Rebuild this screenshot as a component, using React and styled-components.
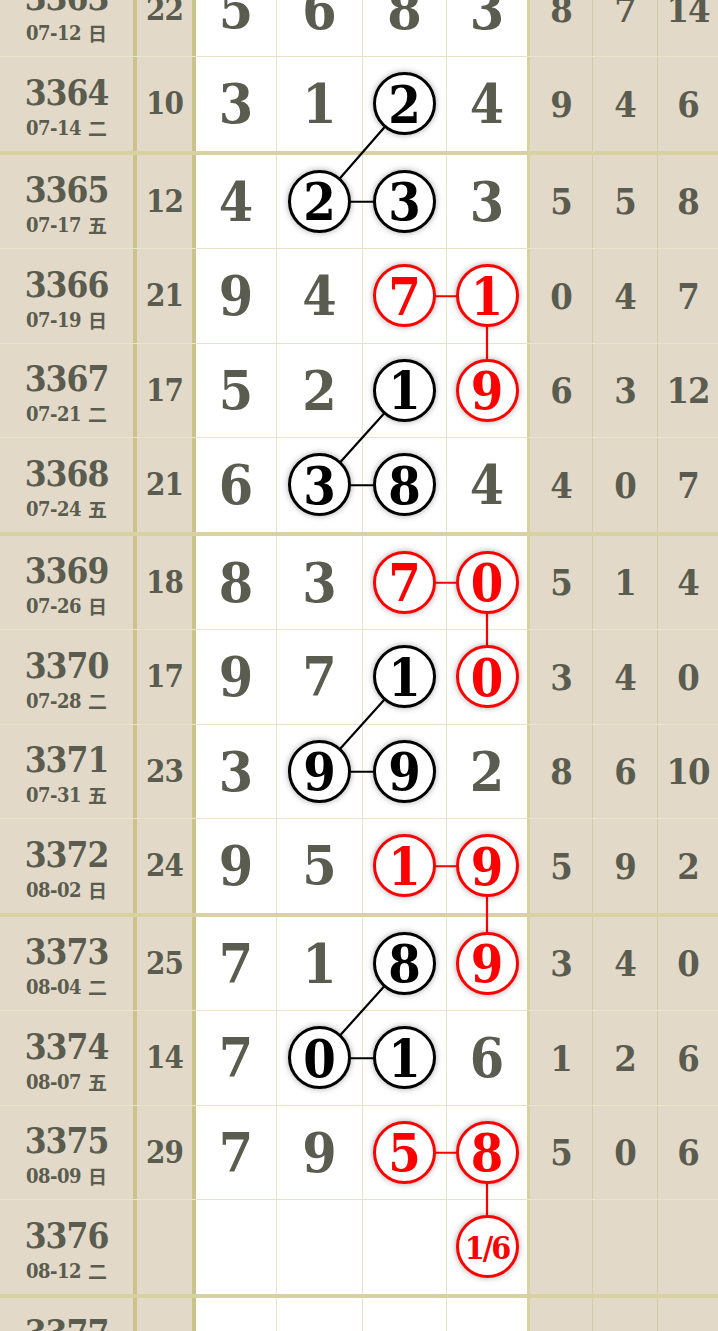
import React from 'react';
import styled, { createGlobalStyle, css } from 'styled-components';

const GlobalStyle = createGlobalStyle`
  html, body { margin: 0; padding: 0; background: #ffffff; overflow: hidden; }
  body { font-family: "DejaVu Serif", "Liberation Serif", "Noto Sans CJK SC", serif; }
`;

const ROW_H = 93.5;
const THIN = 1;
const THICK = 4;
const COL_W = [137, 59, 81, 86, 84, 83, 63, 65, 60];
const DIGIT_CX = [236, 319.5, 404.5, 487];

const INK = '#5a5c4f';
const BEIGE = '#e2d9c8';
const LINE_THIN = 'rgba(190, 178, 100, 0.35)';
const LINE_THICK = 'rgba(190, 178, 100, 0.6)';

const b = (v) => ({ v, c: 'b' });
const r = (v) => ({ v, c: 'r' });

const ROWS = [
  { no: '3363', date: '07-12', wd: '日', sum: '22', d: [5, 6, 8, 3], m: [8, 7, 14] },
  { no: '3364', date: '07-14', wd: '二', sum: '10', d: [3, 1, b(2), 4], m: [9, 4, 6] },
  { no: '3365', date: '07-17', wd: '五', sum: '12', d: [4, b(2), b(3), 3], m: [5, 5, 8] },
  { no: '3366', date: '07-19', wd: '日', sum: '21', d: [9, 4, r(7), r(1)], m: [0, 4, 7] },
  { no: '3367', date: '07-21', wd: '二', sum: '17', d: [5, 2, b(1), r(9)], m: [6, 3, 12] },
  { no: '3368', date: '07-24', wd: '五', sum: '21', d: [6, b(3), b(8), 4], m: [4, 0, 7] },
  { no: '3369', date: '07-26', wd: '日', sum: '18', d: [8, 3, r(7), r(0)], m: [5, 1, 4] },
  { no: '3370', date: '07-28', wd: '二', sum: '17', d: [9, 7, b(1), r(0)], m: [3, 4, 0] },
  { no: '3371', date: '07-31', wd: '五', sum: '23', d: [3, b(9), b(9), 2], m: [8, 6, 10] },
  { no: '3372', date: '08-02', wd: '日', sum: '24', d: [9, 5, r(1), r(9)], m: [5, 9, 2] },
  { no: '3373', date: '08-04', wd: '二', sum: '25', d: [7, 1, b(8), r(9)], m: [3, 4, 0] },
  { no: '3374', date: '08-07', wd: '五', sum: '14', d: [7, b(0), b(1), 6], m: [1, 2, 6] },
  { no: '3375', date: '08-09', wd: '日', sum: '29', d: [7, 9, r(5), r(8)], m: [5, 0, 6] },
  { no: '3376', date: '08-12', wd: '二', sum: '', d: ['', '', '', r('1/6')], m: ['', '', ''] },
  { no: '3377', date: '08-14', wd: '四', sum: '', d: ['', '', '', ''], m: ['', '', ''] },
];

const isGroupEnd = (no) => (Number(no) - 3364) % 4 === 0;

// [fromRow, fromCol, toRow, toCol, colour]
const LINKS = [
  [1, 2, 2, 1, 'b'], [2, 1, 2, 2, 'b'],
  [3, 2, 3, 3, 'r'], [3, 3, 4, 3, 'r'],
  [4, 2, 5, 1, 'b'], [5, 1, 5, 2, 'b'],
  [6, 2, 6, 3, 'r'], [6, 3, 7, 3, 'r'],
  [7, 2, 8, 1, 'b'], [8, 1, 8, 2, 'b'],
  [9, 2, 9, 3, 'r'], [9, 3, 10, 3, 'r'],
  [10, 2, 11, 1, 'b'], [11, 1, 11, 2, 'b'],
  [12, 2, 12, 3, 'r'], [12, 3, 13, 3, 'r'],
];

const rowCenters = (() => {
  const out = [];
  let y = 0;
  ROWS.forEach((row) => {
    out.push(y + ROW_H / 2);
    y += ROW_H + (isGroupEnd(row.no) ? THICK : THIN);
  });
  return out;
})();

const Board = styled.div`
  position: relative;
  width: 718px;
  margin-top: -37.5px;
`;

const Row = styled.div`
  display: grid;
  grid-template-columns: ${COL_W.map((w) => `${w}px`).join(' ')};
  height: ${ROW_H}px;
  box-sizing: content-box;
  border-bottom: ${(p) => (p.$thick ? `${THICK}px solid ${LINE_THICK}` : `${THIN}px solid ${LINE_THIN}`)};
`;

const Cell = styled.div`
  box-sizing: border-box;
  display: flex;
  align-items: center;
  justify-content: center;
  color: ${INK};
  font-weight: bold;
  ${(p) => p.$tone === 'beige' && css`background: ${BEIGE};`}
  ${(p) => p.$tone === 'white' && css`background: #ffffff;`}
  border-right: ${(p) => (p.$edge ? `${p.$edge}px solid ${p.$edge > 1 ? LINE_THICK : LINE_THIN}` : 'none')};
`;

const IssueCell = styled(Cell)`
  flex-direction: column;
  gap: 8px;
  padding-top: 6px;
`;

const IssueNo = styled.div`
  font-size: 35px;
  line-height: 34px;
  font-stretch: condensed;
  letter-spacing: -1px;
`;

const IssueDate = styled.div`
  font-size: 20px;
  line-height: 20px;
  height: 20px;
  font-stretch: condensed;
  letter-spacing: -0.5px;
  display: flex;
  align-items: center;
  gap: 7px;
`;

const Weekday = styled.span`
  font-family: "Noto Sans CJK SC", sans-serif;
  font-size: 19px;
  line-height: 20px;
  font-weight: 700;
  letter-spacing: 0;
`;

const SumText = styled.span`
  font-size: 31px;
  font-stretch: condensed;
  letter-spacing: -1px;
  line-height: 1;
`;

const Digit = styled.span`
  font-size: 55px;
  line-height: 1;
  font-stretch: condensed;
`;

const Miss = styled.span`
  font-size: 36px;
  line-height: 1;
  font-stretch: condensed;
  letter-spacing: -1px;
`;

const Ball = styled.span`
  position: relative;
  z-index: 2;
  box-sizing: border-box;
  width: 63px;
  height: 63px;
  border-radius: 50%;
  background: #ffffff;
  border: 3px solid ${(p) => (p.$red ? '#ff0000' : '#000000')};
  color: ${(p) => (p.$red ? '#ff0000' : '#000000')};
  box-shadow: 0 0 6px rgba(0, 0, 0, 0.35);
  display: flex;
  align-items: center;
  justify-content: center;
  font-size: ${(p) => (p.$small ? '32px' : '52px')};
  letter-spacing: ${(p) => (p.$small ? '-2px' : '0')};
  font-stretch: condensed;
  line-height: 1;
  padding-top: 2px;
`;

const Links = styled.svg`
  position: absolute;
  left: 0;
  top: 0;
  z-index: 1;
  pointer-events: none;
`;

function DigitCell({ value, edge }) {
  const isBall = value && typeof value === 'object';
  return (
    <Cell $tone="white" $edge={edge}>
      {isBall ? (
        <Ball $red={value.c === 'r'} $small={String(value.v).length > 1}>
          {value.v}
        </Ball>
      ) : (
        <Digit>{value}</Digit>
      )}
    </Cell>
  );
}

const DIGIT_EDGES = [1, 1, 1, 3];
const MISS_EDGES = [1, 1, 0];

export default function App() {
  const totalH = rowCenters[rowCenters.length - 1] + ROW_H;
  return (
    <>
      <GlobalStyle />
      <Board>
        {ROWS.map((row) => (
          <Row key={row.no} $thick={isGroupEnd(row.no)}>
            <IssueCell $tone="beige" $edge={4}>
              <IssueNo>{row.no}</IssueNo>
              <IssueDate>
                <span>{row.date}</span>
                <Weekday>{row.wd}</Weekday>
              </IssueDate>
            </IssueCell>
            <Cell $tone="beige" $edge={4}>
              <SumText>{row.sum}</SumText>
            </Cell>
            {row.d.map((v, i) => (
              <DigitCell key={i} value={v} edge={DIGIT_EDGES[i]} />
            ))}
            {row.m.map((v, i) => (
              <Cell key={i} $tone="beige" $edge={MISS_EDGES[i]}>
                <Miss>{v}</Miss>
              </Cell>
            ))}
          </Row>
        ))}
        <Links width="718" height={totalH}>
          {LINKS.map(([r1, c1, r2, c2, col], i) => (
            <line
              key={i}
              x1={DIGIT_CX[c1]}
              y1={rowCenters[r1]}
              x2={DIGIT_CX[c2]}
              y2={rowCenters[r2]}
              stroke={col === 'r' ? '#ff0000' : '#000000'}
              strokeWidth="2.2"
            />
          ))}
        </Links>
      </Board>
    </>
  );
}
